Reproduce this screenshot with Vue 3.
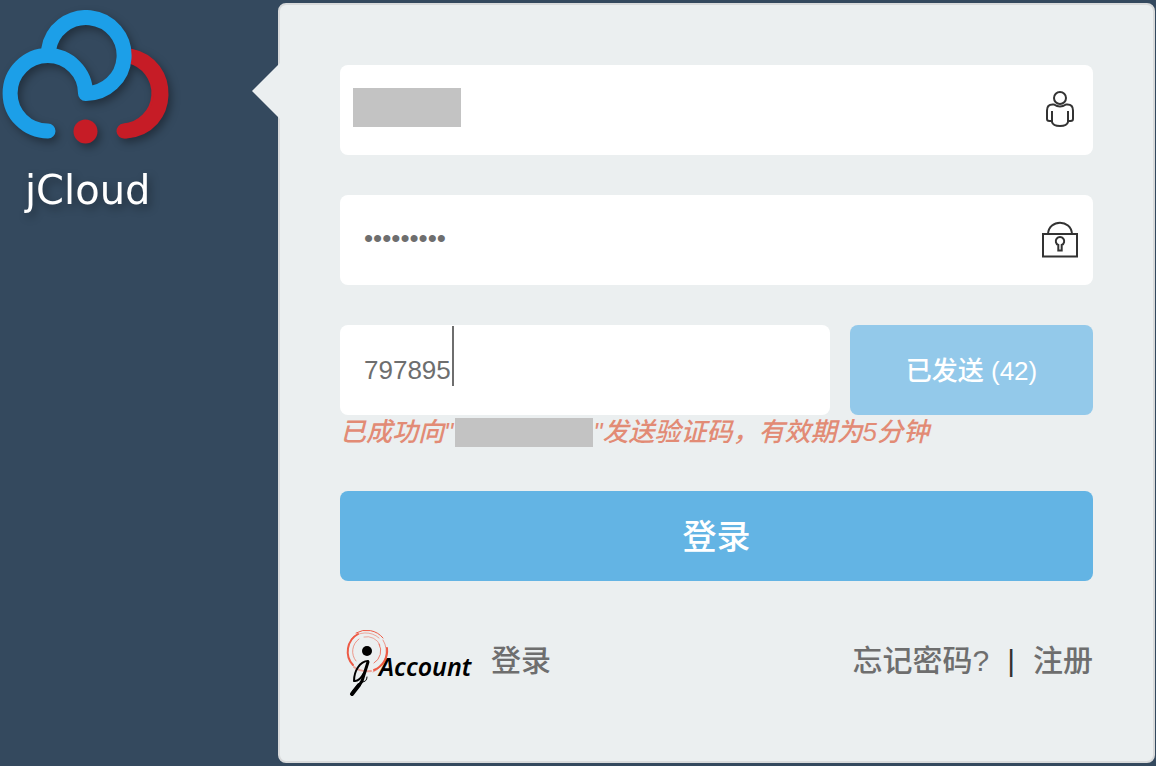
<script setup>
import { ref } from 'vue'

const account = ref('')
const password = ref('jcloud797')
const code = ref('797895')
const seconds = ref(42)
</script>

<template>
  <div class="page">
    <aside class="brand">
      <svg class="brand-logo" viewBox="0 0 180 220" role="img" aria-label="jCloud">
        <g fill="none" stroke-width="15" stroke-linecap="round" stroke-linejoin="round">
          <path stroke="#c61c26" d="M129 56A38 38 0 0 1 124 131" />
          <path stroke="#c61c26" d="M130 56C172 64 172 127 126 131" />
          <path stroke="#1c9fe8" d="M48 131A37.700 37.700 0 1 1 85.500 93.500A38 38 0 1 0 48.500 50" />
        </g>
        <circle cx="85.500" cy="131.500" r="12" fill="#c61c26" />
        <text x="25" y="204">jCloud</text>
      </svg>
    </aside>

    <main class="card">
      <form class="form" @submit.prevent>
        <div class="field">
          <input v-model="account" type="text" aria-label="账号" autocomplete="off" />
          <span class="mask mask-account"></span>
          <svg class="icon" viewBox="0 0 40 40" aria-hidden="true">
            <circle cx="20" cy="8" r="6" />
            <path d="M12 31H9.500Q7 31 7 29V20.500Q7 14.500 12.500 14.500H14Q20 18.500 26 14.500H27.500Q33 14.500 33 20.500V29Q33 31 30.500 31H28M12 21V32Q13 36 20 36Q27 36 28 32V21" />
          </svg>
        </div>

        <div class="field">
          <input v-model="password" type="password" aria-label="密码" autocomplete="off" />
          <svg class="icon" viewBox="0 0 40 40" aria-hidden="true">
            <path d="M3 14H37V36.500H3ZM8 14C9 -1 31 -1 32 14" />
            <path class="keyhole" d="M18.300 25A4.200 4.200 0 1 1 21.700 25V30.500H18.300Z" />
          </svg>
        </div>

        <div class="code-row">
          <div class="field">
            <input v-model="code" type="text" aria-label="验证码" autocomplete="off" />
            <span class="caret"></span>
          </div>
          <button class="send" type="button">已发送 ({{ seconds }})</button>
        </div>
        <p class="message">已成功向"<span class="mask mask-phone"></span>"发送验证码，有效期为5分钟</p>

        <button class="submit" type="submit">登录</button>

        <div class="links">
          <a class="jaccount" href="#">
            <svg class="jaccount-logo" viewBox="0 0 140 68" role="img" aria-label="jAccount">
              <g fill="none" stroke="#ed5a45" stroke-linecap="round">
                <path stroke-width="2" d="M13 35A20 20 0 0 1 18 4" />
                <path stroke-width="1" d="M16 3A21 21 0 0 1 43 8" />
                <path stroke-width="1" opacity=".5" d="M11 9A20 20 0 0 1 39 8" />
                <path stroke-width="2" d="M47 18A21 21 0 0 1 34 40" />
                <path stroke-width="1" opacity=".6" d="M43 10A22 22 0 0 1 33 42" />
                <path stroke-width="1" opacity=".6" d="M16 31A15 15 0 0 1 19 9" />
                <path stroke-width="1" opacity=".5" d="M24 7A14 14 0 0 1 40 15" />
                <path stroke-width="1" opacity=".8" d="M39 14A14 14 0 0 1 34 33" />
                <path stroke-width="2" opacity=".5" d="M14 37Q20 42 31 41" />
              </g>
              <circle cx="27" cy="21" r="5" fill="#000" />
              <g fill="none" stroke="#000" stroke-linecap="round" stroke-linejoin="round">
                <path stroke-width="2" d="M28 31C20 31 14 41 14 51Q19 52 24 43" />
                <path stroke-width="3" d="M28 32L22 51C19 57 14 59 12 64" />
                <path stroke-width="4" d="M19 55L12 64" />
                <path stroke-width="1" d="M22 52Q27 52 27 47" />
              </g>
              <text x="39" y="46">Account</text>
            </svg>
            <span>登录</span>
          </a>
          <nav class="help">
            <a href="#">忘记密码?</a>
            <span class="divider">|</span>
            <a href="#">注册</a>
          </nav>
        </div>
      </form>
    </main>
  </div>
</template>

<style>
body {
  margin: 0;
  background: #34495e;
}
</style>

<style scoped>
.page {
  display: flex;
  box-sizing: border-box;
  min-height: 100vh;
  padding: 3px 1px 3px 0;
  align-items: flex-start;
  background: #34495e;
  color: #6e6e6e;
  font-family: "Liberation Sans", "Noto Sans CJK SC", sans-serif;
  font-weight: 500;
}

.brand {
  flex: 0 0 278px;
}

.brand-logo {
  display: block;
  width: 180px;
  height: 220px;
  margin-top: -3px;
  filter: drop-shadow(3px 4px 4px rgba(0, 0, 0, 0.35));
}

.brand-logo text {
  fill: #fff;
  font-family: "DejaVu Sans", sans-serif;
  font-size: 40px;
  font-weight: 400;
}

.card {
  position: relative;
  flex: 1;
  min-width: 0;
  padding: 60px 60px 64px;
  border: 2px solid #d8dadb;
  border-radius: 8px;
  background: #ebeff0;
}

.card::before {
  content: "";
  position: absolute;
  top: 58px;
  left: -28px;
  border: solid transparent;
  border-width: 28px 28px 28px 0;
  border-right-color: #ebeff0;
}

.form {
  display: flex;
  flex-direction: column;
}

.field {
  position: relative;
  height: 90px;
  margin-bottom: 40px;
}

input {
  display: block;
  box-sizing: border-box;
  width: 100%;
  height: 100%;
  padding: 0 80px 0 24px;
  border: 0;
  border-radius: 8px;
  outline: 0;
  background: #fff;
  color: #6e6e6e;
  font: 26px "Liberation Sans", "Noto Sans CJK SC", sans-serif;
}

input[type="password"] {
  padding-bottom: 4px;
}

.icon {
  position: absolute;
  top: 25px;
  right: 13px;
  width: 40px;
  height: 40px;
  fill: none;
  stroke: #333;
  stroke-width: 2px;
}

.mask {
  background: #c3c3c3;
}

.mask-account {
  position: absolute;
  top: 23px;
  left: 13px;
  width: 108px;
  height: 39px;
}

.code-row {
  display: flex;
  gap: 20px;
}

.code-row .field {
  flex: 1;
  margin: 0;
}

.caret {
  position: absolute;
  top: 1px;
  left: 112px;
  width: 2px;
  height: 60px;
  background: #6e6e6e;
}

button {
  padding: 0 0 4px;
  border: 0;
  border-radius: 8px;
  color: #fff;
  font-family: inherit;
  font-weight: inherit;
}

.send {
  flex: 0 0 243px;
  background: #93c9ea;
  font-size: 26px;
}

.message {
  height: 34px;
  margin: 0 0 42px;
  color: #e28b75;
  font-size: 26px;
  font-style: italic;
  line-height: 34px;
  white-space: nowrap;
}

.mask-phone {
  display: inline-block;
  width: 138px;
  height: 29px;
  margin: 0 0 4px 2px;
  vertical-align: middle;
}

.submit {
  height: 90px;
  background: #63b4e4;
  font-size: 34px;
}

.links {
  display: flex;
  justify-content: space-between;
  align-items: center;
  margin-top: 50px;
  height: 66px;
  font-size: 30px;
  line-height: 40px;
}

.links a {
  color: #6e6e6e;
  text-decoration: none;
}

.links .jaccount,
.help {
  display: flex;
  align-items: center;
}

.jaccount {
  gap: 11px;
}

.jaccount span,
.help {
  padding-bottom: 6px;
}

.jaccount-logo {
  width: 140px;
  height: 68px;
}

.jaccount-logo text {
  fill: #000;
  font-family: "Noto Sans", sans-serif;
  font-size: 25px;
  font-style: italic;
  font-weight: 600;
}

.divider {
  margin: 0 18px;
  color: #333;
}
</style>
